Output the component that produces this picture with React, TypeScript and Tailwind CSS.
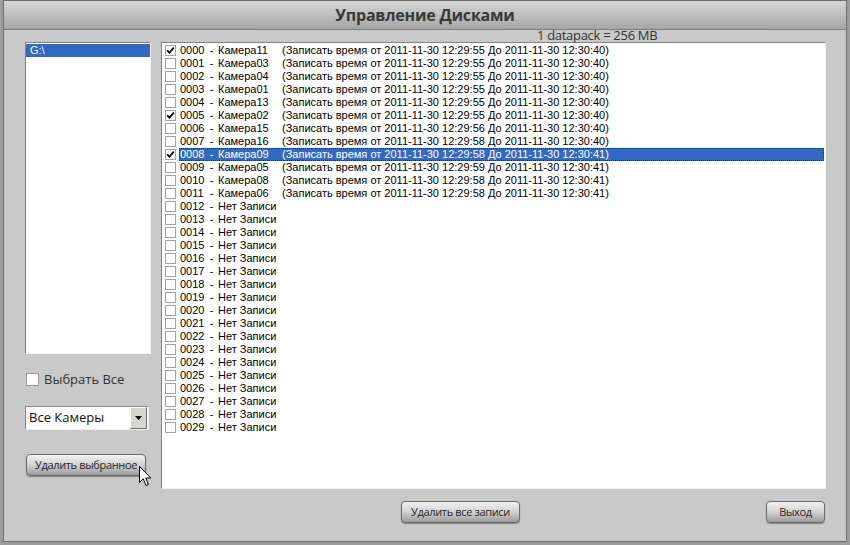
import React from 'react';

type Rec = { id: string; cam?: string; from?: string; to?: string; checked?: boolean; selected?: boolean };

const RECS: Rec[] = [
  { id: '0000', cam: 'Камера11', from: '12:29:55', to: '12:30:40', checked: true },
  { id: '0001', cam: 'Камера03', from: '12:29:55', to: '12:30:40' },
  { id: '0002', cam: 'Камера04', from: '12:29:55', to: '12:30:40' },
  { id: '0003', cam: 'Камера01', from: '12:29:55', to: '12:30:40' },
  { id: '0004', cam: 'Камера13', from: '12:29:55', to: '12:30:40' },
  { id: '0005', cam: 'Камера02', from: '12:29:55', to: '12:30:40', checked: true },
  { id: '0006', cam: 'Камера15', from: '12:29:56', to: '12:30:40' },
  { id: '0007', cam: 'Камера16', from: '12:29:58', to: '12:30:40' },
  { id: '0008', cam: 'Камера09', from: '12:29:58', to: '12:30:41', checked: true, selected: true },
  { id: '0009', cam: 'Камера05', from: '12:29:59', to: '12:30:41' },
  { id: '0010', cam: 'Камера08', from: '12:29:58', to: '12:30:41' },
  { id: '0011', cam: 'Камера06', from: '12:29:58', to: '12:30:41' },
  ...Array.from({ length: 18 }, (_, i) => ({ id: String(12 + i).padStart(4, '0') })),
];

const ui = { fontFamily: '"Open Sans", "DejaVu Sans", sans-serif' };
const sys = { fontFamily: '"Liberation Sans", Arial, sans-serif' };

function Check({ checked }: { checked?: boolean }) {
  return (
    <span className="w-[11px] h-[11px] shrink-0 border border-[#a3a3a3] bg-white flex items-center justify-center">
      {checked && (
        <svg width="9" height="9" viewBox="0 0 9 9">
          <path d="M1.2 4.4 L3.4 6.8 L7.8 1.6" fill="none" stroke="#000" strokeWidth="1.7" />
        </svg>
      )}
    </span>
  );
}

function Btn({ label, className }: { label: string; className: string }) {
  return (
    <button
      className={`h-[22px] rounded-[4px] border border-[#6b6b6b] bg-gradient-to-b from-[#f2f2f2] via-[#d2d2d2] to-[#9c9c9c] text-[11px] tracking-[-0.35px] text-[#1e1e1e] shadow-[0_1px_1px_rgba(0,0,0,0.35)] flex items-center justify-center ${className}`}
      style={ui}
    >
      {label}
    </button>
  );
}

export default function App() {
  return (
    <div className="relative w-[850px] h-[545px] bg-[#9d9d9d] px-[3px] pb-[3px] overflow-hidden">
      <div className="h-full flex flex-col border border-[#6c6c6c] bg-[#c9c9c9]">
        <div className="h-[29px] shrink-0 border-b border-[#7c7c7c] bg-gradient-to-b from-[#d6d6d6] to-[#a6a6a6] flex items-center justify-center">
          <span className="text-[16px] font-bold text-[#383838] tracking-[-0.2px]" style={ui}>
            Управление Дисками
          </span>
        </div>

        <div className="relative flex-1 flex pl-[21px] pr-[20px] pt-[12px]">
          <span className="absolute left-[533px] top-[-2px] text-[13px] leading-[15px] tracking-[-0.3px] text-[#333]" style={ui}>
            1 datapack = 256 MB
          </span>

          <div className="w-[126px] shrink-0 flex flex-col">
            <div className="h-[312px] bg-white border-t border-l border-[#838383] border-r-[#f4f4f4] border-b-[#f4f4f4] border-r border-b pt-px">
              <div className="h-[13px] bg-[#316ac5] text-white text-[11px] leading-[13px] pl-[4px]" style={sys}>
                G:\
              </div>
            </div>

            <div className="mt-[19px] flex items-center gap-[5px] pl-px">
              <span className="w-[13px] h-[13px] bg-white border border-[#9a9a9a]" />
              <span className="text-[13px] leading-[13px] text-[#333]" style={ui}>
                Выбрать Все
              </span>
            </div>

            <div className="mt-[20px] w-[124px] h-[24px] bg-white border-t border-l border-[#8a8a8a] border-r border-b border-r-[#efefef] border-b-[#efefef] flex items-center">
              <span className="flex-1 pl-[3px] text-[13px] text-[#111]" style={ui}>
                Все Камеры
              </span>
              <span className="w-[17px] h-[22px] mr-px bg-[#d8d6d0] border-t border-l border-white border-r border-b border-r-[#6f6f6f] border-b-[#6f6f6f] flex items-center justify-center">
                <svg width="7" height="4" viewBox="0 0 7 4">
                  <path d="M0 0 H7 L3.5 4 Z" fill="#000" />
                </svg>
              </span>
            </div>

            <Btn label="Удалить выбранное" className="mt-[24px] ml-px w-[120px]" />
          </div>

          <div className="ml-[10px] flex-1 flex flex-col">
            <div className="h-[447px] bg-white border-t border-l border-[#838383] border-r border-b border-r-[#f4f4f4] border-b-[#f4f4f4] pt-px">
              {RECS.map(r => (
                <div key={r.id} className="h-[13px] flex items-center pl-[3px] text-[11px] leading-[13px]" style={sys}>
                  <Check checked={r.checked} />
                  <div
                    className={`ml-[3px] mr-px flex-1 h-[13px] flex items-center pl-[1px] ${
                      r.selected ? 'bg-[#316ac5] text-white outline-1 outline-dotted outline-[#1b2f55] -outline-offset-1' : 'text-black'
                    }`}
                  >
                    <span className="w-[25px]">{r.id}</span>
                    <span className="w-[13px] text-center">-</span>
                    {r.cam ? (
                      <>
                        <span className="w-[64px]">{r.cam}</span>
                        <span className="whitespace-pre">
                          {`(Записать время от 2011-11-30 ${r.from} До 2011-11-30 ${r.to})`}
                        </span>
                      </>
                    ) : (
                      <span>Нет Записи</span>
                    )}
                  </div>
                </div>
              ))}
            </div>

            <div className="mt-[12px] flex">
              <Btn label="Удалить все записи" className="ml-[240px] w-[119px]" />
              <Btn label="Выход" className="ml-auto mr-px w-[59px]" />
            </div>
          </div>
        </div>
      </div>

      <svg className="absolute left-[139px] top-[466px]" width="13" height="21" viewBox="0 0 13 21">
        <path d="M0.5 0.5 L0.5 16.5 L4.3 12.8 L7 19.5 L9.4 18.5 L6.8 12 L11.8 12 Z" fill="#fff" stroke="#000" strokeWidth="1" strokeLinejoin="miter" />
      </svg>
    </div>
  );
}
